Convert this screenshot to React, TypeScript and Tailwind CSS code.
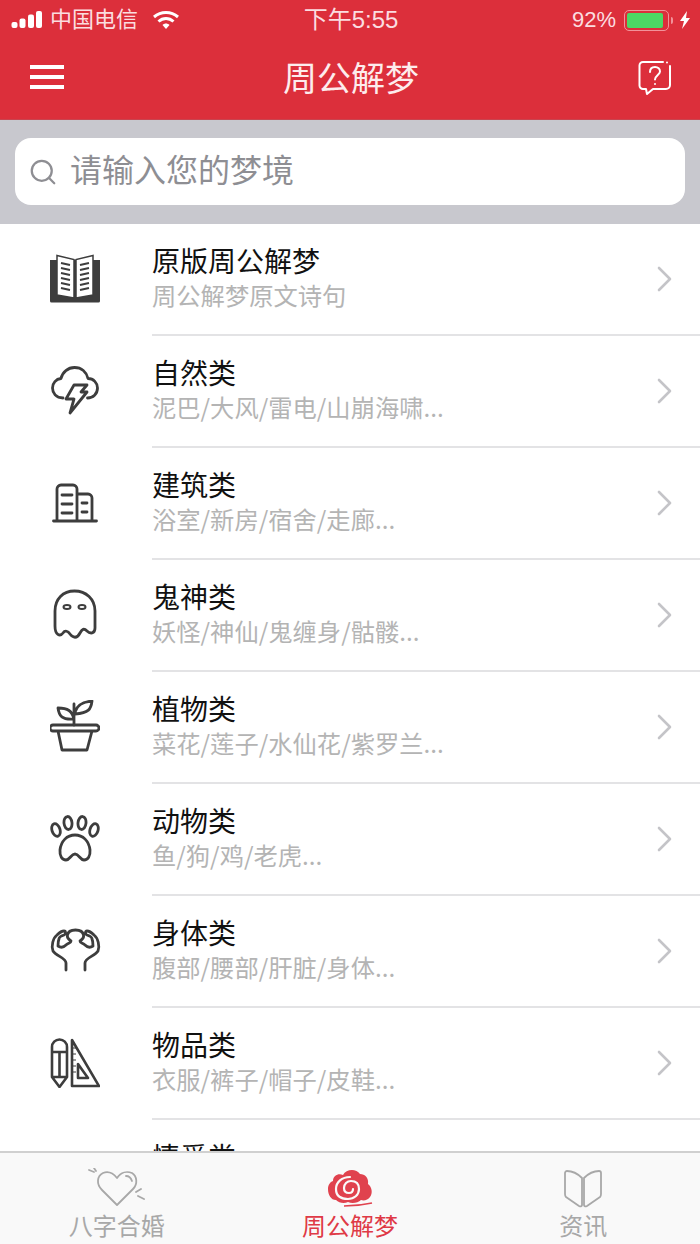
import { ReactNode } from 'react'
import { Search } from 'lucide-react'

const FONT = '[font-family:"Noto_Sans_CJK_SC","Liberation_Sans",sans-serif]'
const STATUS_FONT = '[font-family:"Liberation_Sans","Noto_Sans_CJK_SC",sans-serif]'

const BookIcon = () => (
  <svg className="-mt-[2px]" width="52" height="50" viewBox="0 0 52 50">
    <path d="M1 6h50v41a1.500 1.500 0 0 1-1.500 1.500H2.500A1.500 1.500 0 0 1 1 47z" fill="#3d3d3d" />
    <path d="M8 1.500l17 4v38.500L8 41zM44 1.500L27 5.500v38.500L44 41z" fill="#fff" stroke="#3d3d3d" strokeWidth="1.500" />
    <path d="M12 9l9 2M12 14l9 2M12 19l9 2M12 24l9 2M12 29l9 2M12 34l9 2M40 9l-9 2M40 14l-9 2M40 19l-9 2M40 24l-9 2M40 29l-9 2M40 34l-9 2" stroke="#3d3d3d" strokeWidth="2" />
  </svg>
)

const StormIcon = () => (
  <svg className="-mt-[2px]" width="48" height="50" viewBox="0 0 48 50" fill="none" stroke="#3d3d3d" strokeWidth="2.800" strokeLinejoin="round" strokeLinecap="round">
    <path d="M12 32C5 32 1.500 27 1.500 22c0-5 3.500-9 8.500-9.500C11.500 6 17 1.500 23.500 1.500c7 0 12 4.500 13.500 11 5.500 0 9.500 4.500 9.500 9.500 0 6-4.500 10-10 10" />
    <path d="M23 19h13l-6 7h6L19 47l4-14h-8z" fill="#fff" />
  </svg>
)

const BuildingIcon = () => (
  <svg className="-mt-[3px]" width="46" height="40" viewBox="0 0 46 40" fill="none" stroke="#3d3d3d" strokeWidth="2.800" strokeLinecap="round">
    <path d="M1.500 38h43M5 38V6a4 4 0 0 1 4-4h12a4 4 0 0 1 4 4v32M25 11h11a4 4 0 0 1 4 4v23" />
    <path d="M10 12h10M10 21h10M10 30h10M30 20h5M30 29h5" />
  </svg>
)

const GhostIcon = () => (
  <svg className="-mt-[2px]" width="44" height="52" viewBox="0 0 44 52" fill="none" stroke="#3d3d3d" strokeWidth="2.800" strokeLinejoin="round">
    <path d="M2 37V22C2 10 10 2 21.500 2S42 10 42 22v17c0 6-5 6-8 3-3-3-5-2-7 2-3 6-7 5-10 1-2-3-5-4-7-1-3 4-8 2-8-7z" />
    <ellipse cx="14" cy="18" rx="3.500" ry="2" strokeWidth="2" />
    <ellipse cx="29" cy="18" rx="3.500" ry="2" strokeWidth="2" />
  </svg>
)

const PlantIcon = () => (
  <svg className="-mt-[4px]" width="50" height="52" viewBox="0 0 50 52" fill="none" stroke="#3d3d3d" strokeWidth="2.800" strokeLinejoin="round" strokeLinecap="round">
    <path d="M3 25h43a2.500 2.500 0 0 1 0 6H3a2.500 2.500 0 0 1 0-6zM8 31l4 19h25l5-19" />
    <path d="M24 25V4M25 12c2-7 7-10 17-11-1 8-3 12-17 13zM24 19C22 11 18 8 8 8c1 8 4 12 16 11z" />
  </svg>
)

const PawIcon = () => (
  <svg className="-mt-[4px]" width="50" height="47" viewBox="0 0 50 47" fill="none" stroke="#3d3d3d" strokeWidth="2.800" strokeLinejoin="round">
    <ellipse cx="6" cy="15" rx="4" ry="6.500" transform="rotate(-18 6 15)" />
    <ellipse cx="18" cy="8" rx="4" ry="6.500" transform="rotate(-6 18 8)" />
    <ellipse cx="32" cy="8" rx="4" ry="6.500" transform="rotate(6 32 8)" />
    <ellipse cx="44" cy="15" rx="4" ry="6.500" transform="rotate(18 44 15)" />
    <path d="M25 20c8 0 14 6 15 15 .5 6-2 10-6 10-4 0-5-6-9-6s-5 6-9 6-6.500-4-6-10c1-9 7-15 15-15z" />
  </svg>
)

const MuscleIcon = () => (
  <svg className="-mt-[4px]" width="51" height="44" viewBox="-1 -1 51 44" fill="none" stroke="#3d3d3d" strokeWidth="2.800" strokeLinecap="round" strokeLinejoin="round">
    <path d="M15 41V34C15 29 5 27 2 22C0 17 2 9 6 6C8 4 11 2 13 2C15 2 15 5 13 6C10 7 8 8 8 10C7 12 7 15 7 17C10 19 13 18 15 16C17 14 20 14 20 12C17 10 16 8 16.500 6C17 3 20 1 24.500 1C29 1 32 3 32.500 6C33 8 32 10 29 12C29 14 32 14 34 16C36 18 39 19 42 17C42 15 42 12 41 10C41 8 39 7 36 6C34 5 34 2 36 2C38 2 41 4 43 6C47 9 49 17 47 22C44 27 34 29 34 34V41" />
  </svg>
)

const ToolsIcon = () => (
  <svg className="-mt-[2px]" width="50" height="50" viewBox="0 0 50 50" fill="none" stroke="#3d3d3d" strokeWidth="2.600" strokeLinejoin="round">
    <path d="M2 9a7.500 7.500 0 0 1 15 0v30l-7.500 10L2 39zM2 14h15M9.500 14v25M2 39h15" />
    <path d="M22 2v46h27zM28 26v14h10z" />
    <path d="M22 10h4M22 16h4M22 22h4M22 28h4M22 34h4" strokeWidth="1.200" />
  </svg>
)

const HeartIcon = () => (
  <svg width="58" height="40" viewBox="0 0 58 40" fill="none" stroke="#a8a8a8" strokeWidth="1.800" strokeLinecap="round" strokeLinejoin="round">
    <path d="M29 37L14 22C8 16 9 8 15 5c5-2 10 0 14 5 4-6 10-7 15-5 5 3 6 11 1 16z" />
    <path d="M38 8c3 0 5 2 6 5M1 2l5 2M6 0l2 3M48 24l5-3M50 28l6 3" />
  </svg>
)

const CloudIcon = () => (
  <svg width="46" height="40" viewBox="0 0 46 40">
    <path d="M1 21c0-4 2-7 5-8 0-6 6-8 10-6 3-6 13-7 17-1 5 0 9 4 8 10 4 3 5 9 2 13-2 3-6 4-9 3-3 3-9 4-13 2-4 2-9 1-12-2C4 32 1 27 1 21z" fill="#e0424e" />
    <path d="M23 9C15 9 9 14 9 21s5 10 12 10c6 0 11-4 11-10s-4-8-8-8-7 3-7 7 3 5 5 5 4-1 4-4" fill="none" stroke="#fafafa" strokeWidth="2.200" strokeLinecap="round" />
    <path d="M17 38c10 0 19-1 28-3" fill="none" stroke="#e0424e" strokeWidth="1.600" />
  </svg>
)

const OpenBookIcon = () => (
  <svg width="38" height="38" viewBox="0 0 38 38" fill="none" stroke="#a8a8a8" strokeWidth="1.800" strokeLinejoin="round">
    <path d="M18 8C14 4 8 1 3 1a2 2 0 0 0-2 2v21c0 1 0 2 1 3l13 9c2 1 3 0 3-1zM20 8c4-4 10-7 15-7a2 2 0 0 1 2 2v21c0 1 0 2-1 3l-13 9c-2 1-3 0-3-1z" />
  </svg>
)

const rows: { icon: ReactNode; title: string; sub: string }[] = [
  { icon: <BookIcon />, title: '原版周公解梦', sub: '周公解梦原文诗句' },
  { icon: <StormIcon />, title: '自然类', sub: '泥巴/大风/雷电/山崩海啸...' },
  { icon: <BuildingIcon />, title: '建筑类', sub: '浴室/新房/宿舍/走廊...' },
  { icon: <GhostIcon />, title: '鬼神类', sub: '妖怪/神仙/鬼缠身/骷髅...' },
  { icon: <PlantIcon />, title: '植物类', sub: '菜花/莲子/水仙花/紫罗兰...' },
  { icon: <PawIcon />, title: '动物类', sub: '鱼/狗/鸡/老虎...' },
  { icon: <MuscleIcon />, title: '身体类', sub: '腹部/腰部/肝脏/身体...' },
  { icon: <ToolsIcon />, title: '物品类', sub: '衣服/裤子/帽子/皮鞋...' },
  { icon: null, title: '情爱类', sub: '\u00a0' },
]

function StatusBar() {
  return (
    <div className={`h-[40px] flex items-center justify-between pl-[11px] pr-[9px] text-[#fbdde0] ${STATUS_FONT}`}>
      <div className="flex items-center w-[230px]">
        <svg width="32" height="20" viewBox="0 0 32 20" fill="#fff">
          <rect x="0.500" y="12" width="6" height="6" rx="2" />
          <rect x="8.500" y="8.500" width="6" height="9.500" rx="2" />
          <rect x="17" y="4.500" width="6" height="13.500" rx="2" />
          <rect x="25" y="1" width="6" height="17" rx="2" />
        </svg>
        <span className="text-[22px] leading-none ml-[7px]">中国电信</span>
        <svg className="ml-[14px]" width="28" height="20" viewBox="0 0 28 20" fill="none" stroke="#fff" strokeWidth="3">
          <path d="M2 7c7-6 17-6 24 0M6.500 11.500c4.500-4 10.500-4 15 0" />
          <path d="M10.500 15c2-2 5-2 7 0L14 19z" fill="#fff" stroke="none" />
        </svg>
      </div>
      <div className="text-[24px] leading-none">下午5:55</div>
      <div className="flex items-center justify-end w-[230px]">
        <span className="text-[22px] leading-none">92%</span>
        <div className="ml-[8px] w-[45px] h-[21px] rounded-[5px] border-[1.500px] border-[#f2929a] p-[2px]">
          <div className="h-full w-[92%] rounded-[2px] bg-[#4cd964]" />
        </div>
        <div className="w-[2px] h-[7px] ml-[2px] bg-[#f2929a] rounded-r-full" />
        <svg className="ml-[6px]" width="12" height="18" viewBox="0 0 12 18" fill="#fff">
          <path d="M8 0L1 10h4l-2 8 8-11H7z" />
        </svg>
      </div>
    </div>
  )
}

function Row({ icon, title, sub }: { icon: ReactNode; title: string; sub: string }) {
  return (
    <div className="flex h-[112px] shrink-0">
      <div className="w-[152px] shrink-0 flex items-center justify-center pr-[2px]">{icon}</div>
      <div className="flex-1 flex items-center border-b-2 border-[#e3e3e5] pr-[28px]">
        <div className="flex-1 min-w-0 pb-[6px]">
          <div className="text-[28px] leading-[36px] text-[#111]">{title}</div>
          <div className="text-[24.300px] leading-[32px] mt-[1px] text-[#b4b4b4]">{sub}</div>
        </div>
        <svg width="15" height="26" viewBox="0 0 15 26" fill="none" stroke="#c4c4c8" strokeWidth="2.600" strokeLinecap="round" strokeLinejoin="round">
          <path d="M2 2l11 11L2 24" />
        </svg>
      </div>
    </div>
  )
}

function TabItem({ icon, label, active }: { icon: ReactNode; label: string; active?: boolean }) {
  return (
    <div className="flex flex-col items-center pt-[13px]">
      <div className="h-[42px] flex items-end justify-center">{icon}</div>
      <span className={`text-[24px] leading-[30px] mt-[2px] ${active ? 'text-[#df3a46]' : 'text-[#a8a8a8]'}`}>{label}</span>
    </div>
  )
}

export default function App() {
  return (
    <div className={`w-[700px] h-[1244px] flex flex-col overflow-hidden bg-white ${FONT}`}>
      <header className="h-[120px] shrink-0 bg-[#dc2f3b] border-b border-[#c9444f]">
        <StatusBar />
        <div className="h-[76px] flex items-center justify-between pl-[30px] pr-[28px]">
          <div className="w-[34px] flex flex-col gap-[6px] -mt-[3px]">
            <div className="h-[4px] bg-white" />
            <div className="h-[4px] bg-white" />
            <div className="h-[4px] bg-white" />
          </div>
          <h1 className="text-[34px] leading-none text-[#fdeced] -mt-[3px]">周公解梦</h1>
          <svg width="34" height="36" viewBox="0 0 34 36" fill="none" stroke="#fff" strokeWidth="2" strokeLinejoin="round" strokeLinecap="round">
            <path d="M25 2H5a3.500 3.500 0 0 0-3.500 3.500v20A3.500 3.500 0 0 0 5 29h3l1 5 6-5h13a4 4 0 0 0 4-4V6" />
            <path d="M12 12c0-3 2-5 5-5s5 2 5 4.500c0 3-5 4-5 8" />
            <path d="M17 24v.1M29 2.500v.1" />
          </svg>
        </div>
      </header>

      <div className="h-[104px] shrink-0 bg-[#c8c8ce] px-[15px] pt-[18px]">
        <div className="h-[67px] rounded-[16px] bg-white flex items-center pl-[13px]">
          <Search size={30} strokeWidth={1.800} color="#8e8e93" />
          <span className="ml-[12px] text-[32px] leading-none -mt-[8px] text-[#8e8e93]">请输入您的梦境</span>
        </div>
      </div>

      <div className="flex-1 min-h-0 overflow-hidden flex flex-col">
        {rows.map((r) => (
          <Row key={r.title} icon={r.icon} title={r.title} sub={r.sub} />
        ))}
      </div>

      <nav className="h-[93px] shrink-0 bg-[#f9f9f9] border-t-2 border-[#d0d0d0] grid grid-cols-3">
        <TabItem icon={<HeartIcon />} label="八字合婚" />
        <TabItem icon={<CloudIcon />} label="周公解梦" active />
        <TabItem icon={<OpenBookIcon />} label="资讯" />
      </nav>
    </div>
  )
}
